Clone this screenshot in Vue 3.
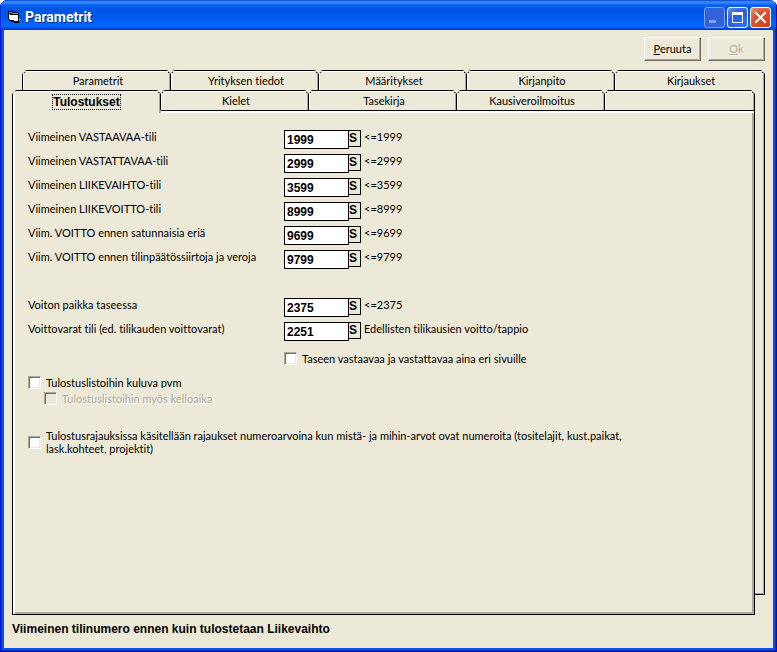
<script setup>
import { ref } from 'vue';

const backTabs = ['Parametrit', 'Yrityksen tiedot', 'Määritykset', 'Kirjanpito', 'Kirjaukset'];
const frontTabs = ['Tulostukset', 'Kielet', 'Tasekirja', 'Kausiveroilmoitus', ''];
const activeTab = ref('Tulostukset');

const accounts = ref([
  { id: 'vastaavaa', label: 'Viimeinen VASTAAVAA-tili', value: '1999', hint: '<=1999' },
  { id: 'vastattavaa', label: 'Viimeinen VASTATTAVAA-tili', value: '2999', hint: '<=2999' },
  { id: 'liikevaihto', label: 'Viimeinen LIIKEVAIHTO-tili', value: '3599', hint: '<=3599' },
  { id: 'liikevoitto', label: 'Viimeinen LIIKEVOITTO-tili', value: '8999', hint: '<=8999' },
  { id: 'satunnaiset', label: 'Viim. VOITTO ennen satunnaisia eriä', value: '9699', hint: '<=9699' },
  { id: 'siirrot', label: 'Viim. VOITTO ennen tilinpäätössiirtoja ja veroja', value: '9799', hint: '<=9799' },
  { id: 'paikka', label: 'Voiton paikka taseessa', value: '2375', hint: '<=2375', gap: true },
  {
    id: 'voittovarat',
    label: 'Voittovarat tili (ed. tilikauden voittovarat)',
    value: '2251',
    hint: 'Edellisten tilikausien voitto/tappio',
  },
]);

const separatePages = ref(false);
const printDate = ref(false);
const printTime = ref(false);
const numericLimits = ref(false);
</script>

<template>
  <div class="window">
    <header class="titlebar">
      <svg class="titlebar__icon" width="14" height="12" viewBox="0 0 14 12" shape-rendering="crispEdges">
        <path d="M0 0h5v1h5v1h1v10H6v-1H3v-1H1V8H0z" fill="#000" />
        <path d="M1 1h3v1H1zM4 2h6v1H4z" fill="#2cc" />
        <path d="M1 3h1v5H1zM2 4h8v6H6V9H2z" fill="#fff" />
        <path d="M11 7h1v1h1v1h-1v1h-1z" fill="#8a8a80" />
      </svg>
      <h1>Parametrit</h1>
      <div class="titlebar__controls">
        <button type="button" class="caption-btn caption-btn--off" aria-label="Pienennä" disabled>
          <svg width="19" height="19" viewBox="0 0 19 19"><path d="M4 12h7v3H4z" fill="#86a4ee" /></svg>
        </button>
        <button type="button" class="caption-btn" aria-label="Suurenna">
          <svg width="19" height="19" viewBox="0 0 19 19">
            <path d="M4 4h11v11H4zM5 7v7h9V7z" fill="#fff" fill-rule="evenodd" />
          </svg>
        </button>
        <button type="button" class="caption-btn caption-btn--close" aria-label="Sulje">
          <svg width="19" height="19" viewBox="0 0 19 19">
            <path d="M5 5l9 9M14 5l-9 9" stroke="#fff" stroke-width="2" stroke-linecap="square" />
          </svg>
        </button>
      </div>
    </header>

    <main class="client">
      <div class="toolbar">
        <button type="button" class="push-btn"><u>P</u>eruuta</button>
        <button type="button" class="push-btn" disabled><u>O</u>k</button>
      </div>

      <div class="sheet">
        <div class="tabs tabs--back">
          <button v-for="tab in backTabs" :key="tab" type="button" class="tab">{{ tab }}</button>
        </div>
        <div class="sheet__behind"></div>
        <div class="tabs tabs--front">
          <button
            v-for="tab in frontTabs"
            :key="tab"
            type="button"
            :class="['tab', { 'tab--active': tab === activeTab }]"
          >
            <span>{{ tab }}</span>
          </button>
        </div>

        <section class="page">
          <div
            v-for="item in accounts"
            :key="item.id"
            :class="['account', { 'account--gap': item.gap }]"
          >
            <label :for="item.id">{{ item.label }}</label>
            <div class="account__field">
              <input :id="item.id" v-model="item.value" type="text" />
              <button type="button">S</button>
            </div>
            <span class="account__hint">{{ item.hint }}</span>
          </div>

          <label class="check check--column">
            <input v-model="separatePages" type="checkbox" />
            <span>Taseen vastaavaa ja vastattavaa aina eri sivuille</span>
          </label>
          <label class="check check--tight">
            <input v-model="printDate" type="checkbox" />
            <span>Tulostuslistoihin kuluva pvm</span>
          </label>
          <label class="check check--nested">
            <input v-model="printTime" type="checkbox" disabled />
            <span>Tulostuslistoihin myös kelloaika</span>
          </label>
          <label class="check check--long">
            <input v-model="numericLimits" type="checkbox" />
            <span>Tulostusrajauksissa käsitellään rajaukset numeroarvoina kun mistä- ja mihin-arvot ovat numeroita (tositelajit, kust.paikat, lask.kohteet, projektit)</span>
          </label>
        </section>
      </div>

      <footer class="status">Viimeinen tilinumero ennen kuin tulostetaan Liikevaihto</footer>
    </main>
  </div>
</template>

<style>
body {
  margin: 0;
  background: #fff;
}
</style>

<style scoped>
.window {
  display: flex;
  flex-direction: column;
  box-sizing: border-box;
  min-height: 100vh;
  overflow: hidden;
  border-radius: 8px 8px 0 0;
  background: #0850e8;
  box-shadow: inset 1px 0 0 #0019cf, inset -1px -1px 0 #00138c, inset 2px 0 0 #0831d9, inset -2px -2px 0 #0030c0;
  color: #000;
  font-family: Lato, "Liberation Sans", sans-serif;
  font-size: 11px;
  font-variant-ligatures: none;
  line-height: 13px;
}

button,
input {
  margin: 0;
  padding: 0;
  color: inherit;
  font: inherit;
  font-variant-ligatures: none;
}

.titlebar {
  display: flex;
  align-items: center;
  box-sizing: border-box;
  height: 30px;
  padding: 4px 6px 0 8px;
  background: linear-gradient(#0842c8 0, #3a93ff 2px, #0a62f0 5px, #0054e3 9px, #0058ee 18px, #0068ff 25px, #0060f8 27px, #0038b8 30px);
  box-shadow: inset 1px 0 0 #0831d9, inset -1px 0 0 #00138c;
}

.titlebar__icon {
  margin-right: 3px;
}

.titlebar h1 {
  flex: 1;
  margin: 0;
  color: #fff;
  font-family: Roboto, sans-serif;
  font-size: 14px;
  font-weight: bold;
  line-height: 16px;
  text-shadow: 1px 1px 0 #0a2a88;
}

.titlebar__controls {
  display: flex;
  gap: 2px;
}

.caption-btn {
  box-sizing: border-box;
  width: 21px;
  height: 21px;
  border: 1px solid #fff;
  border-radius: 3px;
  background: radial-gradient(circle at 80% 90%, #2f72f8, #2a5be0 60%, #6f97f0);
}

.caption-btn svg {
  display: block;
}

.caption-btn--off {
  border-color: #7f9fec;
  background: #3263dc;
}

.caption-btn--close {
  background: radial-gradient(circle at 80% 90%, #d8401c, #e0502c 60%, #f09878);
}

.client {
  display: flex;
  flex: 1;
  flex-direction: column;
  margin: 0 4px 4px;
  padding: 7px 8px 0;
  background: #ece9d8;
}

.toolbar {
  display: flex;
  justify-content: flex-end;
  gap: 7px;
  margin-bottom: 9px;
}

.push-btn {
  box-sizing: border-box;
  width: 57px;
  height: 24px;
  padding-bottom: 1px;
  border: 1px solid;
  border-color: #fff #716f64 #716f64 #fff;
  background: #ece9d8;
  box-shadow: inset -1px -1px 0 #aca899;
}

.push-btn:disabled {
  color: #aca899;
  text-shadow: 1px 1px 0 #fff;
}

.sheet {
  display: grid;
  flex: 1;
  grid-template-columns: 10px minmax(0, 1fr) 10px;
  grid-template-rows: 20px 20px 1fr 20px;
}

.tabs {
  display: flex;
}

.tabs--back {
  grid-area: 1 / 2 / 2 / 4;
}

.tabs--front {
  z-index: 1;
  grid-area: 2 / 1 / 3 / 3;
}

/* corners are cut diagonally, the gradients draw the slanted edge */
.tab {
  box-sizing: border-box;
  width: 149px;
  margin-right: -1px;
  padding: 0 0 1px 3px;
  border: 1px solid #000;
  border-bottom: 0;
  background:
    linear-gradient(135deg, #000 4px, transparent 4px) border-box,
    linear-gradient(225deg, #000 4px, transparent 4px) border-box,
    #ece9d8;
  box-shadow: inset 1px 1px 0 #fff, inset -1px 0 0 #aca899;
  clip-path: polygon(0 4px, 4px 0, calc(100% - 4px) 0, 100% 4px, 100% 100%, 0 100%);
}

.tab:last-child {
  flex: 1;
  margin-right: 0;
}

.tab--active {
  height: 23px;
  padding: 1px 0 0;
  border-right-color: #aca899;
  box-shadow: inset 2px 1px 0 #fff, inset -1px 0 0 #aca899;
  font-family: "Liberation Sans", Arial, sans-serif;
  font-size: 12px;
  font-weight: bold;
}

.tab--active span {
  outline: 1px dotted #000;
}

.sheet__behind {
  grid-area: 2 / 3 / 4 / 4;
  border-right: 1px solid #000;
  border-bottom: 1px solid #000;
  box-shadow: inset -1px -1px 0 #aca899;
}

.page {
  grid-area: 3 / 1 / 5 / 3;
  padding: 19px 14px 40px 15px;
  border: 1px solid #000;
  background: #ece9d8;
  box-shadow: inset 2px 2px 0 #fff, inset -2px -2px 0 #aca899;
}

.account {
  display: grid;
  grid-template-columns: 256px 77px minmax(0, 1fr);
  column-gap: 3px;
  height: 24px;
  white-space: nowrap;
}

.account--gap {
  margin-top: 24px;
}

.account__field {
  display: flex;
  align-items: flex-start;
  margin-left: -3px;
}

.account__field input {
  box-sizing: border-box;
  width: 65px;
  height: 19px;
  padding: 0 2px;
  border: 1px solid #000;
  border-radius: 0;
  background: #fff;
  font-family: "Liberation Sans", Arial, sans-serif;
  font-size: 12px;
  font-weight: bold;
}

.account__field button {
  box-sizing: border-box;
  width: 13px;
  height: 17px;
  margin-left: -1px;
  border: 1px solid #000;
  background: #ece9d8;
  font-family: "Liberation Sans", Arial, sans-serif;
  font-size: 12px;
  font-weight: bold;
  line-height: 13px;
  text-align: left;
}

.account__hint {
  margin-left: -3px;
}

.check {
  display: flex;
  align-items: center;
  gap: 5px;
}

.check input {
  flex: none;
  box-sizing: border-box;
  width: 13px;
  height: 13px;
  border: 1px solid;
  border-color: #aca899 #fff #fff #aca899;
  appearance: none;
  background: #fff;
  box-shadow: inset 1px 1px 0 #716f64, inset -1px -1px 0 #ece9d8;
}

.check input:disabled {
  background: #ece9d8;
}

.check input:disabled + span {
  color: #aca899;
  text-shadow: 1px 1px 0 #fff;
}

.check--column {
  margin: 6px 0 0 256px;
}

.check--tight {
  margin-top: 11px;
}

/* one-line caption box is too short for descenders */
.check--tight span {
  height: 11px;
  overflow: hidden;
  line-height: 11px;
}

.check--nested {
  margin: 3px 0 0 16px;
}

.check--long {
  max-width: 610px;
  margin-top: 24px;
}

.status {
  padding: 8px 0 12px;
  font-family: "Liberation Sans", Arial, sans-serif;
  font-size: 12px;
  font-weight: bold;
}
</style>
